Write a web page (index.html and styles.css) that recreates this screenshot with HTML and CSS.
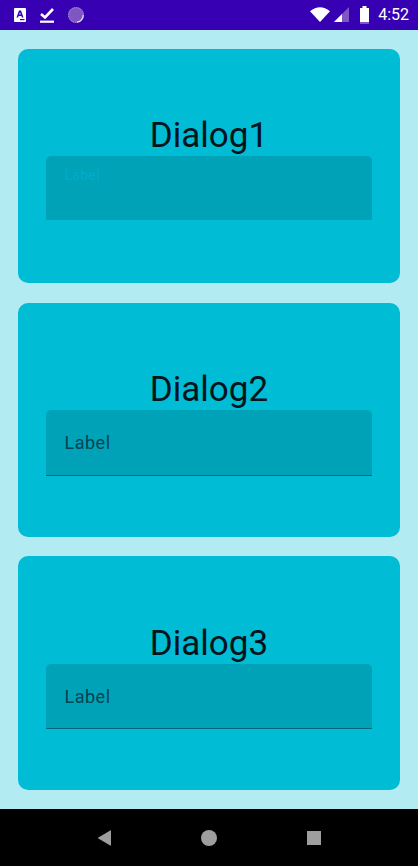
FILE: index.html
```html
<!DOCTYPE html>
<html lang="en">
<head>
  <meta charset="UTF-8" />
  <meta name="viewport" content="width=device-width, initial-scale=1" />
  <title>Dialogs</title>
  <link rel="stylesheet" href="styles.css">
</head>
<body>
  <div class="status-bar">
    <div class="status-icons">
      <svg width="12" height="14" viewBox="0 0 12 14"><rect width="12" height="14" rx="1" fill="#fff"/><path d="M2.5 9.5 L5 2.5 H7 L9.5 9.5 H7.9 L7.4 8 H4.6 L4.1 9.5 Z M5.2 6.5 H6.8 L6 4.2 Z" fill="#3700b3" fill-rule="evenodd"/><rect x="6" y="11" width="4.5" height="1.2" fill="#3700b3"/></svg>
      <svg width="14" height="17" viewBox="0 0 14 17"><path d="M1 8 L5 11.5 L13 3" fill="none" stroke="#fff" stroke-width="2.6"/><rect y="14.6" width="14" height="2.2" fill="#fff"/></svg>
      <svg width="16" height="16" viewBox="0 0 16 16"><circle cx="8" cy="8" r="8" fill="#7e57c2"/><circle cx="8" cy="8" r="7.3" fill="none" stroke="#b39ddb" stroke-width="1" stroke-dasharray="1 1.3"/><path d="M15.3 8 A7.3 7.3 0 0 1 9 15.2" fill="none" stroke="#eee8f8" stroke-width="1.1"/></svg>
    </div>
    <div class="status-right">
      <svg class="wifi" width="20" height="15" viewBox="0 0 20 15"><path d="M0 4.2 Q10 -3.6 20 4.2 L10 15 Z" fill="#fff"/></svg>
      <svg class="signal" width="15" height="15" viewBox="0 0 15 15"><path d="M0 15 L15 0 V15 Z" fill="#7e57c2"/><path d="M0 15 L8 7 V15 Z" fill="#fff"/></svg>
      <svg class="battery" width="9" height="18" viewBox="0 0 9 18"><rect x="2.5" width="4" height="2" fill="#fff"/><rect y="2" width="9" height="16" fill="#7e57c2"/><rect y="2" width="9" height="14" fill="#fff"/></svg>
      <span class="clock">4:52</span>
    </div>
  </div>

  <div class="content">
    <div class="card">
      <h2 class="card-title">Dialog1</h2>
      <div class="field field-disabled"><span class="field-label">Label</span></div>
    </div>
    <div class="card">
      <h2 class="card-title">Dialog2</h2>
      <div class="field"><span class="field-label">Label</span></div>
    </div>
    <div class="card">
      <h2 class="card-title">Dialog3</h2>
      <div class="field"><span class="field-label">Label</span></div>
    </div>
  </div>

  <div class="nav-bar">
    <svg width="14" height="16" viewBox="0 0 14 16"><path d="M0.6 8 L13.2 0.4 Q14 0 14 1 V15 Q14 16 13.2 15.6 Z" fill="#9e9e9e"/></svg>
    <svg width="16" height="16" viewBox="0 0 16 16"><circle cx="8" cy="8" r="8" fill="#9e9e9e"/></svg>
    <svg width="14" height="14" viewBox="0 0 14 14"><rect width="14" height="14" fill="#9e9e9e"/></svg>
  </div>
</body>
</html>
```

FILE: styles.css
```css
* { box-sizing: border-box; }
html, body {
  margin: 0;
  padding: 0;
  height: 100%;
}
body {
  width: 418px;
  height: 866px;
  overflow: hidden;
  display: flex;
  flex-direction: column;
  font-family: Roboto, sans-serif;
  background: #b2ebf2;
}
.status-bar {
  height: 29.5px;
  flex: none;
  background: #3700b3;
  display: flex;
  align-items: center;
  justify-content: space-between;
  padding: 0 9px 0 14px;
  color: #fff;
}
.status-icons, .status-right {
  display: flex;
  align-items: center;
}
.status-icons { gap: 14px; }
.wifi { margin-right: 4px; }
.signal { margin-right: 11px; }
.battery { margin-right: 9px; }
.clock {
  font-size: 16px;
  line-height: 20px;
}
.content {
  flex: 1;
  display: flex;
  flex-direction: column;
  gap: 19.6px;
  padding: 19.5px 18px 0;
}
.card {
  height: 234px;
  flex: none;
  background: #00bcd4;
  border-radius: 10px;
  padding: 66.4px 28px 0;
}
.card-title {
  margin: 0;
  height: 41px;
  line-height: 41px;
  text-align: center;
  font-size: 35px;
  font-weight: 400;
  color: #00141c;
}
.field {
  height: 65.7px;
  background: #00a2b8;
  border-radius: 5px 5px 0 0;
  border-bottom: 1px solid #00687a;
  padding: 22px 18.5px 0;
}
.field-label {
  display: block;
  font-size: 18px;
  line-height: 22px;
  letter-spacing: 0.5px;
  color: #014453;
}
.field-disabled {
  height: 64px;
  border-bottom-color: #00a2b8;
  padding-top: 9px;
}
.field-disabled .field-label {
  font-size: 14px;
  line-height: 20px;
  letter-spacing: 0.3px;
  color: #00acce;
}
.nav-bar {
  height: 57px;
  flex: none;
  background: #000;
  display: flex;
  align-items: center;
  justify-content: space-between;
  padding: 0 97px;
}
```
